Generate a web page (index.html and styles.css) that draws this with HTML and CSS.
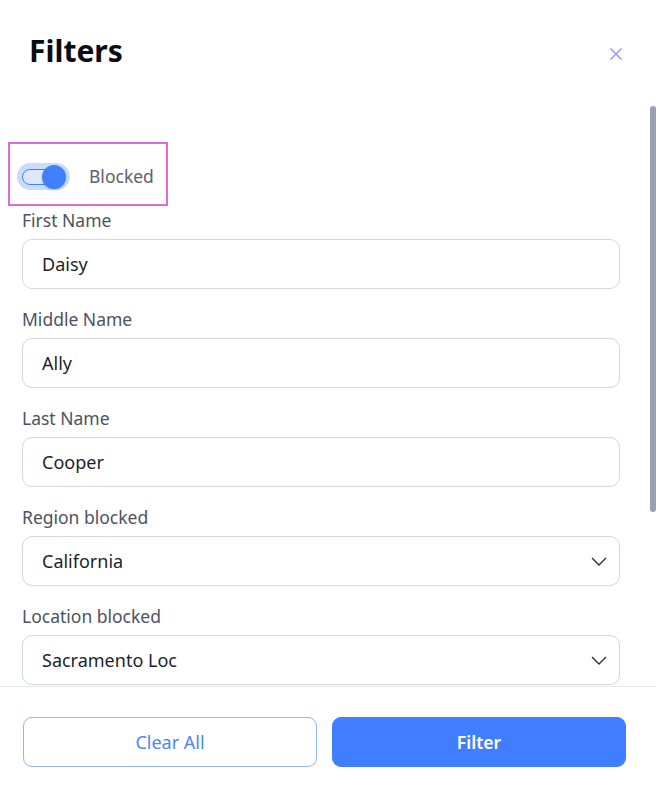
FILE: index.html
```html
<!DOCTYPE html>
<html lang="en">
<head>
<meta charset="utf-8">
<title>Filters</title>
<link rel="stylesheet" href="styles.css">
</head>
<body>
<div class="drawer">
  <header class="drawer-header">
    <h1 class="title">Filters</h1>
    <button class="close" aria-label="Close">
      <svg width="12" height="12" viewBox="0 0 12 12"><path d="M0.5 0.5 L11.5 11.5 M11.5 0.5 L0.5 11.5" stroke="#8c8cff" stroke-width="1.3" fill="none"/></svg>
    </button>
  </header>
  <div class="drawer-body">
    <label class="toggle-row">
      <span class="switch">
        <span class="track"></span>
        <span class="knob"></span>
      </span>
      <span class="toggle-text">Blocked</span>
    </label>
    <div class="field">
      <div class="label">First Name</div>
      <div class="input">Daisy</div>
    </div>
    <div class="field">
      <div class="label">Middle Name</div>
      <div class="input">Ally</div>
    </div>
    <div class="field">
      <div class="label">Last Name</div>
      <div class="input">Cooper</div>
    </div>
    <div class="field">
      <div class="label">Region blocked</div>
      <div class="input select">
        <span>California</span>
        <svg class="chev" width="16" height="9" viewBox="0 0 16 9"><path d="M1 1 L8 8 L15 1" stroke="#2b2f3a" stroke-width="1.4" fill="none"/></svg>
      </div>
    </div>
    <div class="field">
      <div class="label">Location blocked</div>
      <div class="input select">
        <span>Sacramento Loc</span>
        <svg class="chev" width="16" height="9" viewBox="0 0 16 9"><path d="M1 1 L8 8 L15 1" stroke="#2b2f3a" stroke-width="1.4" fill="none"/></svg>
      </div>
    </div>
  </div>
  <div class="scroll-thumb"></div>
  <footer class="drawer-footer">
    <button class="btn btn-outline">Clear All</button>
    <button class="btn btn-primary">Filter</button>
  </footer>
</div>
</body>
</html>
```

FILE: styles.css
```css
* { box-sizing: border-box; }
html, body { margin: 0; padding: 0; background: #ffffff; }
body { font-family: "Noto Sans", "Open Sans", sans-serif; }

.drawer {
  position: relative;
  width: 656px;
  height: 796px;
  display: flex;
  flex-direction: column;
  background: #ffffff;
  overflow: hidden;
}

.drawer-header {
  height: 106px;
  flex: 0 0 106px;
  display: flex;
  justify-content: space-between;
  align-items: flex-start;
  padding: 31px 34px 0 29px;
}
.title {
  margin: 0;
  font-size: 30px;
  line-height: 40px;
  font-weight: 700;
  color: #0b0b14;
}
.close {
  margin-top: 17px;
  padding: 0;
  border: 0;
  background: none;
  width: 12px;
  height: 12px;
  display: block;
}
.close svg { display: block; }

.drawer-body {
  flex: 1 1 auto;
  overflow: hidden;
  padding: 36px 36px 0 22px;
  display: flex;
  flex-direction: column;
}

.toggle-row {
  align-self: flex-start;
  margin-left: -14px;
  margin-bottom: 2px;
  border: 2px solid #dc6adc;
  padding: 19px 12px 14px 7px;
  display: flex;
  align-items: center;
  gap: 19px;
}
.switch {
  position: relative;
  width: 53px;
  height: 27px;
  border-radius: 14px;
  background: #c9dcff;
  display: flex;
  align-items: center;
  padding-left: 5px;
}
.track {
  width: 40px;
  height: 16px;
  border: 1px solid #3f80ff;
  border-radius: 8px;
  background: #dde8ff;
}
.knob {
  position: absolute;
  left: 25px;
  top: 2px;
  width: 24px;
  height: 24px;
  border-radius: 50%;
  background: #3f80ff;
  box-shadow: 0 1px 2px rgba(30, 60, 140, 0.25);
}
.toggle-text {
  font-size: 17.5px;
  line-height: 27px;
  color: #5a6070;
}

.field {
  display: flex;
  flex-direction: column;
  margin-bottom: 18px;
}
.label {
  font-size: 17.5px;
  line-height: 24px;
  color: #4d5261;
  margin-bottom: 7px;
}
.input {
  height: 50px;
  border: 1px solid #d3d7de;
  border-radius: 10px;
  padding: 0 12px 0 19px;
  display: flex;
  align-items: center;
  font-size: 18px;
  color: #1d1f2a;
}
.select { justify-content: space-between; }
.chev { display: block; margin-top: 0; }

.scroll-thumb {
  position: absolute;
  right: 0;
  top: 106px;
  width: 6px;
  height: 406px;
  border-radius: 3px;
  background: #9a9fb1;
}

.drawer-footer {
  flex: 0 0 110px;
  border-top: 1px solid #e6e8ec;
  padding: 30px 30px 29px 23px;
  display: flex;
  gap: 15px;
}
.btn {
  flex: 1 1 0;
  height: 50px;
  border-radius: 9px;
  font-family: "Noto Sans", "Open Sans", sans-serif;
  font-size: 18px;
  cursor: pointer;
}
.btn-outline {
  background: #ffffff;
  border: 1px solid #8fb3ff;
  color: #4a85ff;
}
.btn-primary {
  background: #3f7fff;
  border: 1px solid #3f7fff;
  color: #ffffff;
  font-weight: 600;
  font-size: 17.5px;
}
```
